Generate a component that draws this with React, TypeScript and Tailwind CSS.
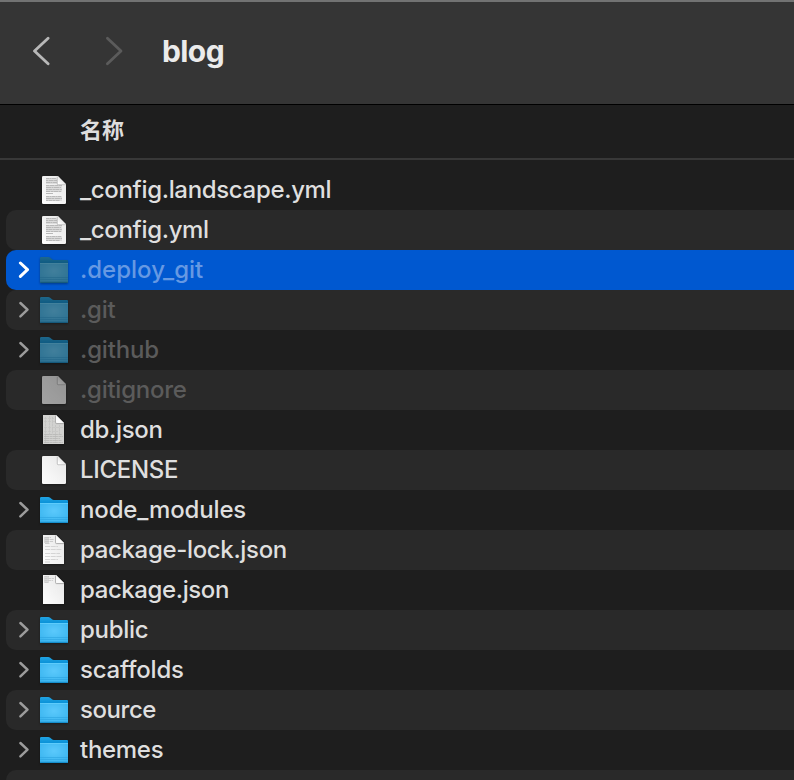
type Kind = "folder" | "text" | "blank" | "dense" | "lock" | "package";

interface Entry {
  name: string;
  kind: Kind;
  hidden?: boolean;
  selected?: boolean;
  tracking: string;
}

const entries: Entry[] = [
  { name: "_config.landscape.yml", kind: "text", tracking: "tracking-[-0.33px]" },
  { name: "_config.yml", kind: "text", tracking: "tracking-[-0.33px]" },
  { name: ".deploy_git", kind: "folder", hidden: true, selected: true, tracking: "tracking-[0px]" },
  { name: ".git", kind: "folder", hidden: true, tracking: "tracking-[-0.2px]" },
  { name: ".github", kind: "folder", hidden: true, tracking: "tracking-[-0.15px]" },
  { name: ".gitignore", kind: "blank", hidden: true, tracking: "tracking-[-0.25px]" },
  { name: "db.json", kind: "dense", tracking: "tracking-[-0.33px]" },
  { name: "LICENSE", kind: "blank", tracking: "tracking-[-0.3px]" },
  { name: "node_modules", kind: "folder", tracking: "tracking-[-0.15px]" },
  { name: "package-lock.json", kind: "lock", tracking: "tracking-[-0.34px]" },
  { name: "package.json", kind: "package", tracking: "tracking-[-0.4px]" },
  { name: "public", kind: "folder", tracking: "tracking-[-0.3px]" },
  { name: "scaffolds", kind: "folder", tracking: "tracking-[-0.2px]" },
  { name: "source", kind: "folder", tracking: "tracking-[-0.45px]" },
  { name: "themes", kind: "folder", tracking: "tracking-[-0.3px]" },
];

const Gradients = () => (
  <svg width="0" height="0" className="absolute" aria-hidden="true">
    <defs>
      <radialGradient id="folder-front" cx="0.5" cy="0.4" r="0.65">
        <stop offset="0" stopColor="#5bc9fc" />
        <stop offset="1" stopColor="#3ab5ef" />
      </radialGradient>
      <linearGradient id="folder-back" x1="0" y1="0" x2="0" y2="1">
        <stop offset="0" stopColor="#22a4e4" />
        <stop offset="0.5" stopColor="#0790d6" />
      </linearGradient>
      <linearGradient id="paper" x1="0" y1="1" x2="1" y2="0">
        <stop offset="0" stopColor="#fdfdfd" />
        <stop offset="1" stopColor="#e6e6e6" />
      </linearGradient>
      <linearGradient id="curl" x1="0" y1="1" x2="1" y2="0">
        <stop offset="0.1" stopColor="#ffffff" />
        <stop offset="0.5" stopColor="#e6e6e6" />
      </linearGradient>
    </defs>
  </svg>
);

const FolderIcon = () => (
  <>
    <path d="M40 8.2Q40 7 41.2 7H48.2Q49.3 7 50.2 7.8L52 9.3Q52.7 10 53.8 10H67Q68 10 68 11V20H40Z" fill="url(#folder-back)" />
    <path d="M40 13H68V32Q68 33 67 33H41Q40 33 40 32Z" fill="url(#folder-front)" />
    <path d="M40 13.5H68" stroke="#67d2ff" strokeWidth="0.7" />
    <path d="M40 27.5H68M40 29.5H68" stroke="#2fa6e2" strokeWidth="0.7" />
    <path d="M40 31.5H68" stroke="#35abe6" strokeWidth="1" />
    <path d="M40.3 32.5H67.7" stroke="#168fcc" />
  </>
);

const textLines = [
  { y: 8.5, dash: "3 .5 2 .4 4", end: 56 },
  { y: 10.5, dash: "2 .6 5 .5 3", end: 57 },
  { y: 12.5, dash: "4 .4 2 .5", end: 57 },
  { y: 15.5, dash: "3 .5 5 .6", end: 62 },
  { y: 17.5, dash: "5 .5 2 .5", end: 61 },
  { y: 19.5, dash: "2 .4 4 .5", end: 62 },
  { y: 21.5, dash: "4 .6 3 .4", end: 61 },
  { y: 23.5, dash: "9 0", end: 53 },
  { y: 26.5, dash: "3 .5 2 .5", end: 61 },
  { y: 28.5, dash: "5 .4 3 .6", end: 62 },
  { y: 30.5, dash: "2 .5 4 .5", end: 60 },
];

const PageIcon = ({ lines }: { lines: boolean }) => (
  <>
    <path d="M43.3 6H57.8L66 14.2V32.7Q66 34 64.7 34H43.3Q42 34 42 32.7V7.3Q42 6 43.3 6Z" fill="url(#paper)" />
    {lines && (
      <>
        <path d="M46 8H57V14H46ZM46 15H62V22H46ZM46 26H62V31H46Z" fill="#dcdcdc" />
        {textLines.map(({ y, dash, end }) => (
          <path key={y} d={`M46 ${y}H${end}`} stroke="#b8b8b8" strokeWidth="1" strokeDasharray={dash} />
        ))}
      </>
    )}
    <path d="M57.3 6.5V13.7Q57.3 14.7 58.3 14.7H65.7" fill="none" stroke="#b4b4b4" strokeWidth="0.9" />
    <path d="M57.8 6L66 14.2H58.8Q57.8 14.2 57.8 13.2Z" fill="url(#curl)" />
  </>
);

// Narrow sheets: file previews, each with its own amount of ink
const PreviewIcon = ({ kind }: { kind: Kind }) => (
  <>
    <path d="M43 5H56L64 13V34H43Z" fill={kind === "dense" ? "#d2d2d0" : "url(#paper)"} />
    {kind === "dense" && (
      <>
        <path d="M45.5 7V33M49.5 6V25M52.5 7V24M55.5 15V33M59.5 15V24" stroke="#c0c0be" strokeWidth="0.7" strokeDasharray="2 .6 4 .5" />
        <path d="M44 8.5H54M44 11.5H55M44 17.5H63M44 21.5H58" stroke="#c4c4c2" strokeWidth="0.7" strokeDasharray="3 1" />
        <path d="M44 24.5H62M44 26.5H63M44 28.5H60M44 30.5H62M44 32.5H63" stroke="#b6b6b4" strokeWidth="0.8" strokeDasharray="5 .5 3 .4" />
      </>
    )}
    {kind === "lock" && (
      <>
        <path d="M44 7H49V13H44Z" fill="#d6d6d6" />
        <path d="M45 7.5H51M45 9.5H54M45 11.5H53M45 13.5H50" stroke="#c6c6c6" strokeWidth="0.9" strokeDasharray="4 .6" />
        <path d="M45 16.5H58M45 19.5H62M45 23.5H60M45 26.5H62M45 29.5H58M45 32H50" stroke="#d0d0d0" strokeWidth="0.9" strokeDasharray="5 .7" />
      </>
    )}
    {kind === "package" && (
      <>
        <path d="M44 6H49V13H44Z" fill="#dadada" />
        <path d="M44.5 6.5H49M44.5 8.5H54M44.5 10.5H53M45 12.5H48" stroke="#cbcbcb" strokeWidth="0.9" strokeDasharray="3 .6" />
      </>
    )}
    <path d="M55.6 5.5V12.7Q55.6 13.6 56.5 13.6H64" fill="none" stroke="#a6a6a6" strokeWidth="0.9" />
    <path d="M56 5L64 13H57Q56 13 56 12Z" fill="#fafafa" />
  </>
);

const EntryIcon = ({ kind, dimmed }: { kind: Kind; dimmed?: boolean }) => (
  <svg
    viewBox="38 0 32 40"
    className={`h-10 w-8 shrink-0 drop-shadow-[0_1px_1px_rgba(0,0,0,0.35)] ${dimmed ? "brightness-[0.64] saturate-[0.88]" : ""}`}
    aria-hidden="true"
  >
    {kind === "folder" ? (
      <FolderIcon />
    ) : kind === "text" || kind === "blank" ? (
      <PageIcon lines={kind === "text"} />
    ) : (
      <PreviewIcon kind={kind} />
    )}
  </svg>
);

const Row = ({ entry, striped }: { entry: Entry; striped: boolean }) => {
  const { name, kind, hidden, selected, tracking } = entry;
  const background = selected ? "bg-[#0058d0]" : striped ? "bg-[#292929]" : "";
  const color = selected ? "text-[#6699e3]" : hidden ? "text-[#5b5b5b]" : "text-[#dfdfdf]";

  return (
    <li className={`ml-1.5 flex h-10 items-center rounded-l-[10px] ${background}`}>
      <span className="flex w-8 shrink-0 pb-px pl-3">
        {kind === "folder" && (
          <svg viewBox="0 0 12 18" className="h-[18px] w-3" fill="none" aria-hidden="true">
            <path
              d="M2.4 2L9.5 8.7L2.4 15.4"
              stroke={selected ? "#ffffff" : "#9c9c9c"}
              strokeWidth={selected ? 3 : 2.5}
              strokeLinecap="round"
              strokeLinejoin="round"
            />
          </svg>
        )}
      </span>
      <EntryIcon kind={kind} dimmed={hidden} />
      <span className={`ml-2.5 text-[24px] leading-10 font-[450] whitespace-nowrap ${tracking} ${color}`}>{name}</span>
    </li>
  );
};

const App = () => {
  return (
    <div className="h-[780px] w-full overflow-hidden bg-[#1e1e1e] font-['Inter','Noto_Sans_CJK_SC',sans-serif]">
      <Gradients />
      <header className="flex h-[105px] items-center border-t-2 border-b border-t-[#727373] border-b-black bg-[#353535] pb-1 pl-8">
        <button type="button" aria-label="Back">
          <svg viewBox="0 0 18 30" className="h-[30px] w-[18px]" fill="none">
            <path d="M16.1 2.2L2.5 15L16.1 27.8" stroke="#b8b8b8" strokeWidth="2.8" strokeLinecap="round" strokeLinejoin="round" />
          </svg>
        </button>
        <button type="button" aria-label="Forward" className="ml-[55px]">
          <svg viewBox="0 0 18 30" className="h-[30px] w-[18px]" fill="none">
            <path d="M2.4 2.2L16 15L2.4 27.8" stroke="#5b5b5b" strokeWidth="2.8" strokeLinecap="round" strokeLinejoin="round" />
          </svg>
        </button>
        <h1 className="ml-[39px] text-[30px] leading-10 font-bold tracking-[-0.6px] text-[#ebebeb]">blog</h1>
      </header>
      <div className="flex h-[55px] items-center border-b-2 border-[#383838] pb-[7px] pl-20 font-['Noto_Sans_CJK_SC',sans-serif] text-[22px] leading-8 font-bold text-[#dddddd]">
        名称
      </div>
      <ul className="mt-2.5">
        {entries.map((entry, i) => (
          <Row key={entry.name} entry={entry} striped={i % 2 === 1} />
        ))}
        <li className="ml-1.5 h-10 rounded-l-[10px] bg-[#292929]" />
      </ul>
    </div>
  );
};

export default App;
